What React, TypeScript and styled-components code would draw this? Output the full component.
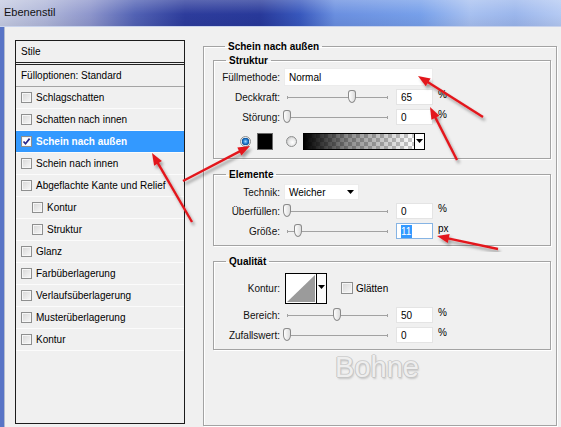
import React from 'react'
import styled, { createGlobalStyle } from 'styled-components'

const GlobalStyle = createGlobalStyle`
  html, body {
    margin: 0;
    padding: 0;
    background: #f0f0f0;
  }
  body {
    font-family: "Liberation Sans", Arial, sans-serif;
    font-size: 10px;
    color: #000;
  }
  * {
    box-sizing: border-box;
  }
`

type Effect = { label: string; indent?: boolean; checked?: boolean; active?: boolean }

const effects: Effect[] = [
  { label: 'Schlagschatten' },
  { label: 'Schatten nach innen' },
  { label: 'Schein nach außen', checked: true, active: true },
  { label: 'Schein nach innen' },
  { label: 'Abgeflachte Kante und Relief' },
  { label: 'Kontur', indent: true },
  { label: 'Struktur', indent: true },
  { label: 'Glanz' },
  { label: 'Farbüberlagerung' },
  { label: 'Verlaufsüberlagerung' },
  { label: 'Musterüberlagerung' },
  { label: 'Kontur' },
]

// tail x, tail y, tip x, tip y
const arrows: [number, number, number, number][] = [
  [483, 117, 418, 76],
  [457, 160, 430, 107],
  [183, 181, 250, 146],
  [192, 222, 152, 153],
  [498, 249, 437, 236],
]

const Caret = () => (
  <svg width="7" height="4" viewBox="0 0 7 4">
    <path d="M0 0h7L3.5 4z" fill="#000" />
  </svg>
)

const Slider = ({ pos }: { pos: number }) => (
  <SliderBox>
    <Track />
    <Thumb style={{ left: pos - 1 }} />
  </SliderBox>
)

const Field = ({ value, unit, selected }: { value: string; unit: string; selected?: boolean }) => (
  <>
    <ValueBox $selected={selected}>
      {selected ? <Highlight>{value}</Highlight> : value}
    </ValueBox>
    <Unit>{unit}</Unit>
  </>
)

const Annotations = () => (
  <Overlay width="561" height="427" viewBox="0 0 561 427">
    <defs>
      <filter id="arrowShadow" x="-20%" y="-20%" width="140%" height="140%">
        <feDropShadow dx="2" dy="3" stdDeviation="1.4" floodColor="#000" floodOpacity="0.35" />
      </filter>
    </defs>
    {arrows.map(([x1, y1, x2, y2], i) => {
      const len = Math.hypot(x2 - x1, y2 - y1)
      const ux = (x2 - x1) / len
      const uy = (y2 - y1) / len
      const bx = x2 - ux * 12
      const by = y2 - uy * 12
      const head = `${x2},${y2} ${bx - uy * 4.5},${by + ux * 4.5} ${bx + uy * 4.5},${by - ux * 4.5}`
      return (
        <g key={i} filter="url(#arrowShadow)">
          <line x1={x1} y1={y1} x2={bx + ux * 2} y2={by + uy * 2} stroke="#e3171c" strokeWidth="2.4" />
          <polygon points={head} fill="#e3171c" />
        </g>
      )
    })}
  </Overlay>
)

export default function App() {
  return (
    <Window>
      <GlobalStyle />
      <TitleBar>Ebenenstil</TitleBar>
      <Frame>
        <StyleList>
          <HeaderRow>Stile</HeaderRow>
          <BlendRow>Fülloptionen: Standard</BlendRow>
          {effects.map((e, i) => (
            <EffectRow key={i} $indent={e.indent} $active={e.active}>
              <CheckBox $checked={e.checked}>
                {e.checked && (
                  <svg width="9" height="9" viewBox="0 0 9 9">
                    <path d="M1.5 4.5l2 2.2L7.6 1.6" fill="none" stroke="#26268c" strokeWidth="1.7" />
                  </svg>
                )}
              </CheckBox>
              {e.label}
            </EffectRow>
          ))}
        </StyleList>

        <Panel>
          <PanelLegend>Schein nach außen</PanelLegend>

          <Group>
            <GroupLegend>Struktur</GroupLegend>
            <Row $h={20}>
              <Label>Füllmethode:</Label>
              <Select $w={149} $h={18}>Normal</Select>
            </Row>
            <Row $h={20}>
              <Label>Deckkraft:</Label>
              <Slider pos={65} />
              <Field value="65" unit="%" />
            </Row>
            <Row $h={20}>
              <Label>Störung:</Label>
              <Slider pos={0} />
              <Field value="0" unit="%" />
            </Row>
            <ColorRow>
              <Radio $on />
              <Swatch />
              <Radio />
              <GradientBar />
              <GradientDrop>
                <Caret />
              </GradientDrop>
            </ColorRow>
          </Group>

          <Group>
            <GroupLegend>Elemente</GroupLegend>
            <Row $h={18}>
              <Label>Technik:</Label>
              <Select $w={75} $h={16}>
                Weicher
                <Caret />
              </Select>
            </Row>
            <Row $h={20}>
              <Label>Überfüllen:</Label>
              <Slider pos={0} />
              <Field value="0" unit="%" />
            </Row>
            <Row $h={20}>
              <Label>Größe:</Label>
              <Slider pos={11} />
              <Field value="11" unit="px" selected />
            </Row>
          </Group>

          <Group>
            <GroupLegend>Qualität</GroupLegend>
            <Row $h={34}>
              <Label>Kontur:</Label>
              <ContourPicker>
                <svg width="30" height="29" viewBox="0 0 30 29">
                  <rect width="30" height="29" fill="#fff" />
                  <path d="M1 28L29 1v27z" fill="#9b9b9b" />
                </svg>
                <ContourDrop>
                  <Caret />
                </ContourDrop>
              </ContourPicker>
              <SmoothBox />
              <span>Glätten</span>
            </Row>
            <Row $h={20}>
              <Label>Bereich:</Label>
              <Slider pos={50} />
              <Field value="50" unit="%" />
            </Row>
            <Row $h={20}>
              <Label>Zufallswert:</Label>
              <Slider pos={0} />
              <Field value="0" unit="%" />
            </Row>
          </Group>

          <Stamp>Bohne</Stamp>
        </Panel>
      </Frame>
      <Annotations />
    </Window>
  )
}

const Window = styled.div`
  position: relative;
  width: 561px;
  height: 427px;
  overflow: hidden;
  display: flex;
  flex-direction: column;
  background: #f0f0f0;
`

const TitleBar = styled.div`
  flex: none;
  height: 27px;
  display: flex;
  align-items: center;
  padding: 0 0 2px 4px;
  font-size: 11px;
  color: #111;
  border-bottom: 1px solid #c9d3ec;
  background:
    linear-gradient(180deg, rgba(255, 255, 255, 0.22), rgba(255, 255, 255, 0) 55%, rgba(0, 0, 30, 0.06)),
    linear-gradient(90deg, #c6cce2 0px, #b0b7d9 45px, #8e96cc 90px, #5262b4 135px, #2d3c9c 185px,
      #28399a 260px, #3858bd 300px, #6a8fe0 335px, #77a0ea 420px, #a7c0f0 470px, #9bb6ec 515px, #b5caf3 561px);
`

const Frame = styled.div`
  flex: 1;
  display: flex;
  align-items: flex-start;
  gap: 18px;
  padding: 13px 0 0 11px;
  border-left: 4px solid #5874c6;
  box-shadow: inset 1px 0 0 #b3bccf;
`

const StyleList = styled.div`
  flex: none;
  width: 170px;
  height: 384px;
  border: 1px solid #1c1c1c;
  background: #f0f0f0;
`

const HeaderRow = styled.div`
  height: 24px;
  line-height: 21px;
  padding-left: 5px;
  border-bottom: 3px double #222;
  font-size: 10px;
`

const BlendRow = styled.div`
  height: 22px;
  line-height: 21px;
  padding-left: 5px;
  border-bottom: 1px solid #a4a4a4;
`

const EffectRow = styled.div<{ $indent?: boolean; $active?: boolean }>`
  height: 22px;
  display: flex;
  align-items: center;
  gap: 4px;
  padding-left: ${(p) => (p.$indent ? 16 : 5)}px;
  padding-bottom: 1px;
  border-bottom: 1px solid #fbfbfb;
  background: ${(p) => (p.$active ? '#3399ff' : 'transparent')};
  color: ${(p) => (p.$active ? '#fff' : '#000')};
  font-weight: ${(p) => (p.$active ? 'bold' : 'normal')};
  white-space: nowrap;
`

const CheckBox = styled.span<{ $checked?: boolean }>`
  flex: none;
  width: 11px;
  height: 11px;
  display: flex;
  align-items: center;
  justify-content: center;
  border: 1px solid #8e8f8f;
  box-shadow: inset 0 0 0 1px #f6f6f6;
  background: ${(p) => (p.$checked ? '#fff' : 'linear-gradient(135deg, #d6d6d6, #f8f8f8)')};
`

const SmoothBox = styled(CheckBox)`
  width: 12px;
  height: 12px;
  margin: 0 3px 0 14px;
`

const Panel = styled.fieldset`
  flex: none;
  width: 354px;
  height: 386px;
  margin: 0;
  min-width: 0;
  padding: 1px 5px 0 9px;
  border: 1px solid #a3a3a3;
  box-shadow: 1px 1px 0 #fff, inset 1px 1px 0 #fff;
`

const PanelLegend = styled.legend`
  margin-left: 12px;
  padding: 0 3px;
  font-weight: bold;
  line-height: 13px;
`

const Group = styled.fieldset`
  width: 338px;
  margin: 0;
  min-width: 0;
  padding: 0 0 4px 0;
  border: 1px solid #a3a3a3;
  box-shadow: 1px 1px 0 #fff, inset 1px 1px 0 #fff;

  &:first-of-type {
    padding-bottom: 5px;
  }

  & + & {
    margin-top: 9px;
    padding-top: 2px;
  }

  &:last-of-type {
    padding-top: 3px;
  }
`

const GroupLegend = styled(PanelLegend)``

const Row = styled.div<{ $h: number }>`
  height: ${(p) => p.$h}px;
  display: flex;
  align-items: center;
`

const Label = styled.span`
  flex: none;
  width: 66px;
  margin-right: 4px;
  text-align: right;
  white-space: nowrap;
  color: #111;
`

const Select = styled.div<{ $w: number; $h: number }>`
  width: ${(p) => p.$w}px;
  height: ${(p) => p.$h}px;
  display: flex;
  align-items: center;
  justify-content: space-between;
  padding: 0 4px 0 4px;
  background: #fff;
  border: 1px solid #ececec;
`

const SliderBox = styled.div`
  position: relative;
  flex: none;
  width: 108px;
  height: 16px;
`

const Track = styled.div`
  position: absolute;
  left: 3px;
  top: 8px;
  width: 101px;
  height: 1px;
  background: #a2a2a2;

  &::before,
  &::after {
    content: '';
    position: absolute;
    top: -1px;
    width: 1px;
    height: 3px;
    background: #a2a2a2;
  }
  &::before {
    left: 0;
  }
  &::after {
    right: 0;
  }
`

const Thumb = styled.div`
  position: absolute;
  top: 1px;
  width: 8px;
  height: 13px;
  border: 1px solid #8a8a8a;
  border-radius: 3px 3px 4px 4px / 3px 3px 6px 6px;
  background: linear-gradient(90deg, #fefefe, #dcdcdc);
`

const ValueBox = styled.div<{ $selected?: boolean }>`
  flex: none;
  width: 37px;
  height: 16px;
  margin-left: 4px;
  padding-left: 4px;
  display: flex;
  align-items: center;
  background: #fff;
  border: 1px solid ${(p) => (p.$selected ? '#86b4e4' : '#e4e4e4')};
`

const Highlight = styled.span`
  background: #3399ff;
  color: #fff;
  padding: 1px 1px 1px 0;
`

const Unit = styled.span`
  margin: -5px 0 0 5px;
`

const ColorRow = styled.div`
  height: 24px;
  margin-top: 2px;
  padding-left: 26px;
  display: flex;
  align-items: center;
`

const Radio = styled.span<{ $on?: boolean }>`
  flex: none;
  width: 11px;
  height: 11px;
  margin-right: 6px;
  margin-left: ${(p) => (p.$on ? 0 : 13)}px;
  border-radius: 50%;
  border: 1px solid #8e8f8f;
  background: ${(p) =>
    p.$on
      ? 'radial-gradient(circle, #9fd8ff 0, #1a73c8 2.5px, #0b4f96 3.5px, #dfe7ee 4px, #f8f8f8 5px)'
      : 'radial-gradient(circle at 60% 60%, #fff 0, #e4e4e4 4px, #d2d2d2 5px)'};
`

const Swatch = styled.span`
  flex: none;
  width: 16px;
  height: 17px;
  background: #000;
  border: 1px solid #6a6a6a;
`

const GradientBar = styled.span`
  flex: none;
  width: 112px;
  height: 17px;
  border: 1px solid #000;
  background:
    linear-gradient(90deg, #000 0%, rgba(0, 0, 0, 0.45) 40%, rgba(0, 0, 0, 0) 100%),
    repeating-conic-gradient(#c8c8c8 0 25%, #fff 0 50%) 0 0 / 8px 8px;
`

const GradientDrop = styled.span`
  flex: none;
  width: 10px;
  height: 17px;
  display: flex;
  align-items: center;
  justify-content: center;
  background: #fff;
  border: 1px solid #000;
  border-left: none;
`

const ContourPicker = styled.div`
  flex: none;
  width: 42px;
  height: 31px;
  margin-left: 1px;
  display: flex;
  border: 1px solid #000;
  background: #fff;
`

const ContourDrop = styled.div`
  flex: none;
  width: 10px;
  display: flex;
  justify-content: center;
  padding-top: 11px;
  border-left: 1px solid #000;
  background: #fbfbfb;
`

/* embossed watermark: pale fill with a thin grey rim and soft drop */
const Stamp = styled.div`
  margin-top: 2px;
  padding-right: 10px;
  text-align: center;
  font-size: 29px;
  line-height: 30px;
  color: #eeeeee;
  text-shadow:
    1px 0 0 #c6c6c6,
    -1px 0 0 #c6c6c6,
    0 1px 0 #c6c6c6,
    0 -1px 0 #d2d2d2,
    1px 2px 2px rgba(0, 0, 0, 0.18);
`

const Overlay = styled.svg`
  position: absolute;
  left: 0;
  top: 0;
  pointer-events: none;
`
